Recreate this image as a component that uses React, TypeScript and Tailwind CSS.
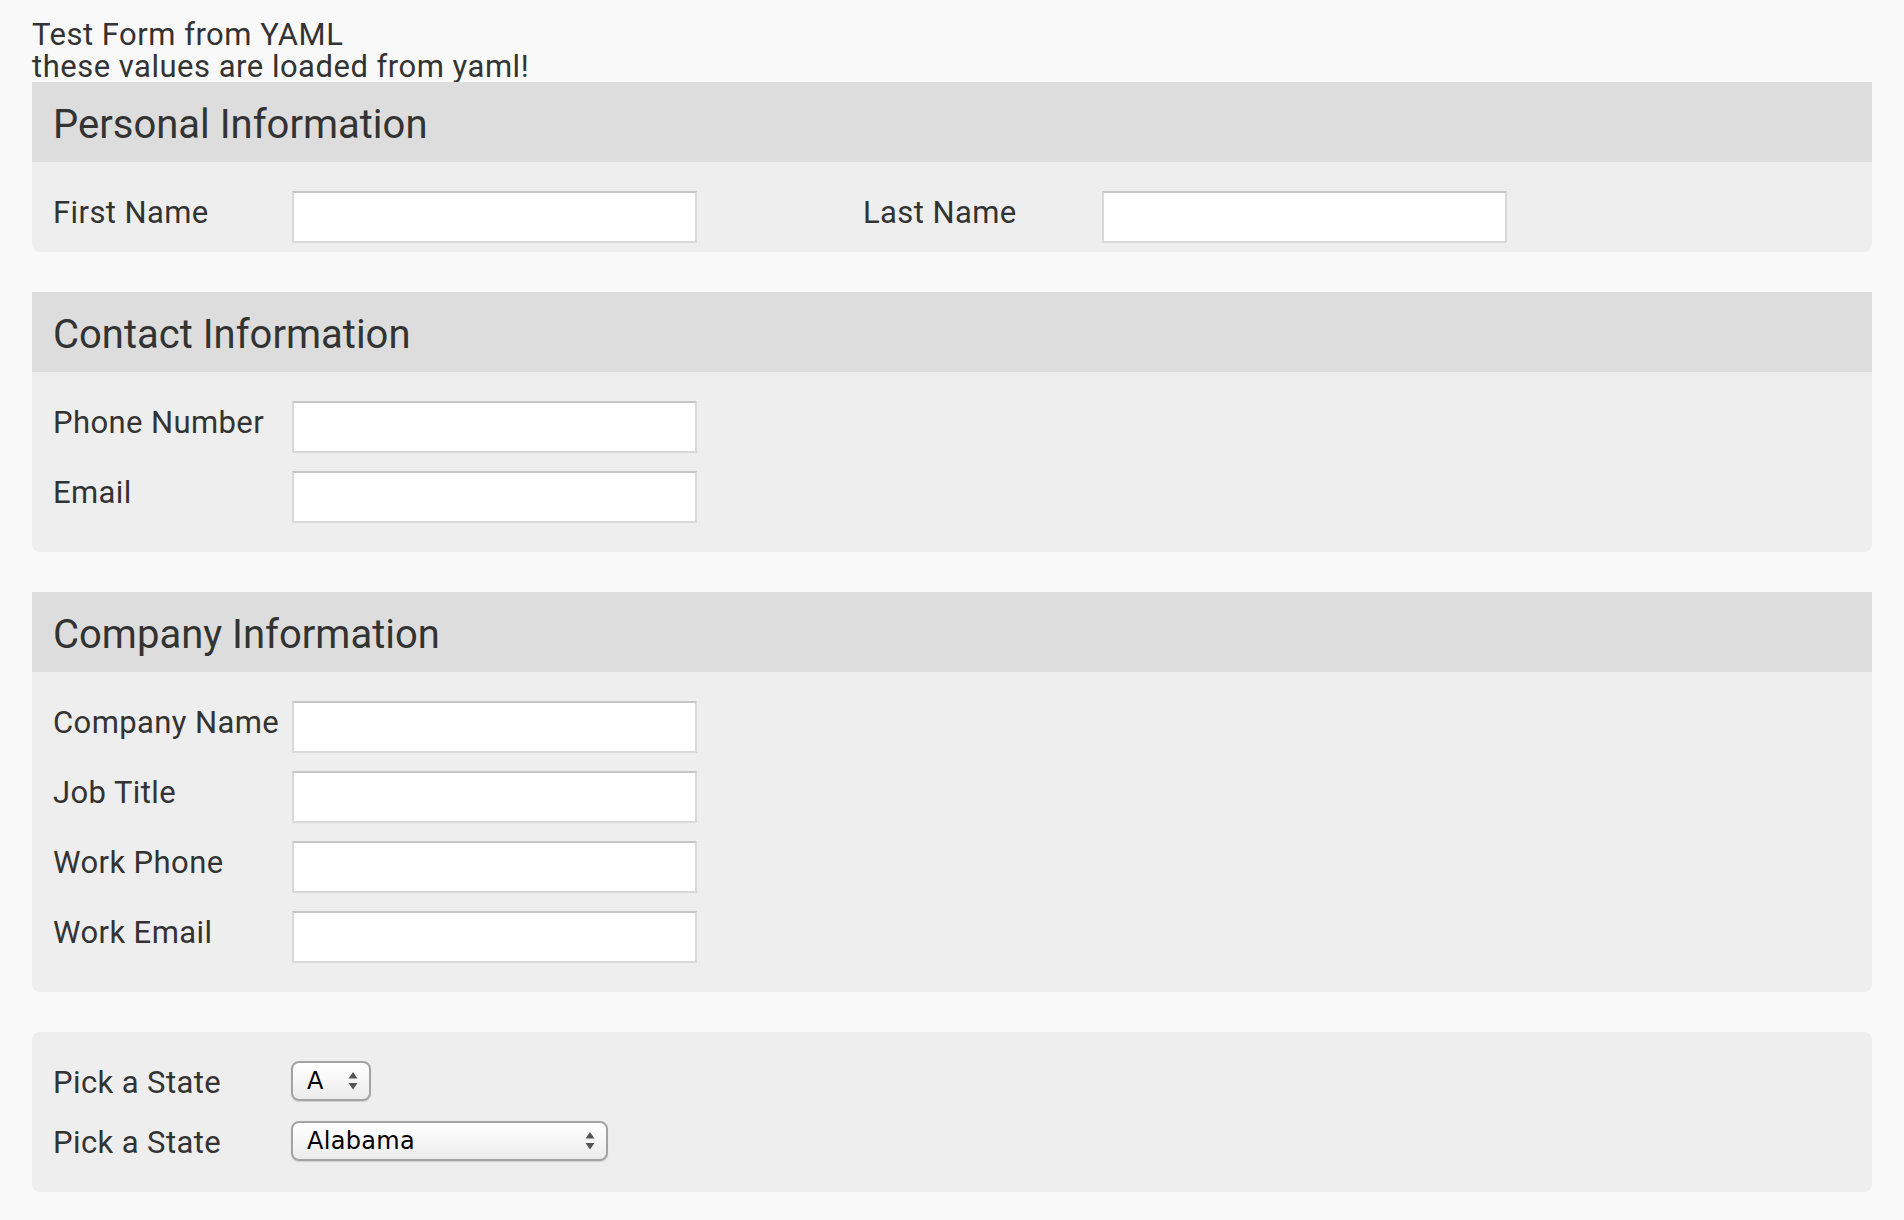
import React from 'react';

type Field = { label: string; name: string };

const contactFields: Field[] = [
  { label: 'Phone Number', name: 'phone' },
  { label: 'Email', name: 'email' },
];

const companyFields: Field[] = [
  { label: 'Company Name', name: 'company' },
  { label: 'Job Title', name: 'title' },
  { label: 'Work Phone', name: 'workPhone' },
  { label: 'Work Email', name: 'workEmail' },
];

const states = ['Alabama', 'Alaska', 'Arizona', 'Arkansas', 'California', 'Colorado'];

function TextInput({ name }: { name: string }) {
  return (
    <input
      id={name}
      name={name}
      type="text"
      className="w-[405px] h-[52px] bg-white border-2 border-[#d9d9d9] border-t-[#c6c6c6] outline-none px-2 text-[28px]"
    />
  );
}

function FieldRow({ label, name }: Field) {
  return (
    <div className="flex h-[52px]">
      <label htmlFor={name} className="w-[239px] shrink-0 whitespace-nowrap leading-[44px]">
        {label}
      </label>
      <TextInput name={name} />
    </div>
  );
}

// up/down chevron pair drawn over the native select
function Arrows() {
  return (
    <svg width="10" height="18" viewBox="0 0 10 18" className="pointer-events-none absolute top-1/2 -translate-y-1/2 right-[13px]">
      <path d="M5 0 L9.5 6.5 L0.5 6.5 Z" fill="#555" />
      <path d="M0.5 11 L9.5 11 L5 17.5 Z" fill="#555" />
    </svg>
  );
}

function StateSelect({ width, short }: { width: string; short?: boolean }) {
  return (
    <div className={`relative h-[40px] ${width}`}>
      <select
        defaultValue={short ? 'A' : 'Alabama'}
        className="block appearance-none w-full h-[40px] rounded-[8px] border-2 border-[#a3a3a3] bg-[linear-gradient(to_bottom,#ffffff,#f7f7f7_45%,#ececec)] shadow-[0_1px_1px_rgba(0,0,0,0.12)] pl-[14px] pr-8 text-[24px] tracking-[0.3px] text-black font-['DejaVu_Sans',sans-serif] outline-none"
      >
        {short
          ? ['A', 'C', 'D', 'F'].map((s) => <option key={s}>{s}</option>)
          : states.map((s) => <option key={s}>{s}</option>)}
      </select>
      <Arrows />
    </div>
  );
}

function Section({ title, children, className = '' }: { title?: string; children: React.ReactNode; className?: string }) {
  return (
    <section className={`bg-[#eeeeee] ${title ? 'rounded-b-[8px]' : 'rounded-[8px]'}`}>
      {title && (
        <div className="h-[80px] bg-[#dddddd] flex items-center px-[21px] pt-[5px]">
          <h2 className="text-[40px] leading-none tracking-normal">{title}</h2>
        </div>
      )}
      <div className={`pl-[21px] ${className}`}>{children}</div>
    </section>
  );
}

export default function App() {
  return (
    <div className="min-h-screen bg-[#f9f9f9] px-[32px] pb-[28px] text-[#333333] font-['Roboto',sans-serif] text-[31px] tracking-[0.4px]">
      <div className="h-[82px] pt-[19px] leading-[32px] tracking-[0.5px]">
        <div>Test Form from YAML</div>
        <div>these values are loaded from yaml!</div>
      </div>

      <div className="flex flex-col gap-[40px]">
        <Section title="Personal Information" className="pt-[29px] pb-[9px]">
          <div className="flex">
            <div className="w-[810px]">
              <FieldRow label="First Name" name="firstName" />
            </div>
            <div className="w-[810px]">
              <FieldRow label="Last Name" name="lastName" />
            </div>
          </div>
        </Section>

        <Section title="Contact Information" className="pt-[29px] pb-[29px] flex flex-col gap-[18px]">
          {contactFields.map((f) => (
            <FieldRow key={f.name} {...f} />
          ))}
        </Section>

        <Section title="Company Information" className="pt-[29px] pb-[29px] flex flex-col gap-[18px]">
          {companyFields.map((f) => (
            <FieldRow key={f.name} {...f} />
          ))}
        </Section>

        <Section className="pt-[29px] pb-[31px] flex flex-col gap-[20px]">
          <div className="flex h-[40px]">
            <label className="w-[238px] shrink-0 leading-[44px]">Pick a State</label>
            <StateSelect width="w-[80px]" short />
          </div>
          <div className="flex h-[40px]">
            <label className="w-[238px] shrink-0 leading-[44px]">Pick a State</label>
            <StateSelect width="w-[317px]" />
          </div>
        </Section>
      </div>
    </div>
  );
}
